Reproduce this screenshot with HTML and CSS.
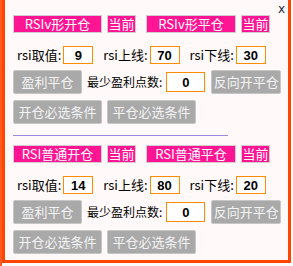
FILE: index.html
```html
<!DOCTYPE html>
<html lang="zh">
<head>
  <meta charset="UTF-8">
  <title>RSI 设置</title>
  <link rel="stylesheet" href="styles.css">
</head>
<body>
  <div class="popup">
    <span class="close">x</span>

    <!-- RSIv 形 -->
    <div class="section">
      <div class="row head">
        <button class="pink wide">RSIv形开仓</button>
        <button class="pink cur">当前</button>
        <button class="pink wide second">RSIv形平仓</button>
        <button class="pink cur">当前</button>
      </div>
      <div class="row params">
        <label>rsi取值:</label><input class="num" value="9">
        <label class="gap">rsi上线:</label><input class="num" value="70">
        <label class="gap">rsi下线:</label><input class="num" value="30">
      </div>
      <div class="row profit">
        <button class="grey w69">盈利平仓</button>
        <label class="min">最少盈利点数:</label><input class="num big" value="0">
        <button class="grey w70">反向开平仓</button>
      </div>
      <div class="row cond">
        <button class="grey w89">开仓必选条件</button>
        <button class="grey w89">平仓必选条件</button>
      </div>
    </div>

    <div class="divider"></div>

    <!-- RSI 普通 -->
    <div class="section">
      <div class="row head">
        <button class="pink wide">RSI普通开仓</button>
        <button class="pink cur">当前</button>
        <button class="pink wide second">RSI普通平仓</button>
        <button class="pink cur">当前</button>
      </div>
      <div class="row params">
        <label>rsi取值:</label><input class="num" value="14">
        <label class="gap">rsi上线:</label><input class="num" value="80">
        <label class="gap">rsi下线:</label><input class="num" value="20">
      </div>
      <div class="row profit">
        <button class="grey w69">盈利平仓</button>
        <label class="min">最少盈利点数:</label><input class="num big" value="0">
        <button class="grey w70">反向开平仓</button>
      </div>
      <div class="row cond">
        <button class="grey w89">开仓必选条件</button>
        <button class="grey w89">平仓必选条件</button>
      </div>
    </div>
  </div>
</body>
</html>
```

FILE: styles.css
```css
body {
  margin: 0;
  height: 266px;
  overflow: hidden;
  font-family: "Noto Sans CJK SC", "Liberation Sans", sans-serif;
  background: linear-gradient(to right, #ff5a1f 0, #ff5a1f 2px, #fbfbfb 2px);
}

/* === POPUP === */
.popup {
  position: relative;
  margin-left: 2px;
  width: 289px;
  height: 263px;
  padding: 15px 0 0 8px;
  box-sizing: border-box;
  background: #fffaf9;
  border: 3px solid #ff4500;
  border-top: none;
}

.close {
  position: absolute;
  top: 3px;
  right: 3px;
  font-size: 12px;
  line-height: 12px;
  color: #1a2a44;
  font-family: "DejaVu Sans", sans-serif;
}

.row {
  display: flex;
  align-items: center;
  white-space: nowrap;
}

/* === BUTTONS === */
button {
  font-family: "Noto Sans CJK SC", "Liberation Sans", sans-serif;
  margin: 0;
  padding: 0;
  flex-shrink: 0;
  white-space: nowrap;
  cursor: pointer;
}

.pink {
  height: 18px;
  font-size: 13px;
  line-height: 16px;
  color: #fff;
  background: #ff1493;
  border: 1px solid #d6cbd0;
  margin-right: 5px;
}

.pink.wide {
  width: 89px;
}

.pink.cur {
  width: 29px;
}

.pink.second {
  margin-left: 5px;
  width: 90px;
}

.grey {
  height: 24px;
  font-size: 13px;
  line-height: 22px;
  color: #f4f4f4;
  background: #a9a9a9;
  border: 1px solid #c6c6c6;
  border-radius: 2px;
}

.w69 { width: 69px; }
.w70 { width: 70px; }
.w89 { width: 89px; }

/* === PARAMS === */
label {
  font-size: 13px;
  line-height: 18px;
  color: #000;
  flex-shrink: 0;
}

.params {
  margin-top: 13px;
  padding-left: 4px;
}

.gap {
  margin-left: 10px;
}

.num {
  width: 30px;
  height: 18px;
  box-sizing: border-box;
  margin-left: 2px;
  padding: 0;
  flex-shrink: 0;
  border: 1px solid #ff8c00;
  background: #fff;
  text-align: center;
  font: bold 13px "Liberation Sans", sans-serif;
}

.num.big {
  width: 39px;
  height: 20px;
  margin: 0 6px 0 4px;
}

.profit {
  margin-top: 6px;
}

.min {
  margin-left: 5px;
  font-size: 12px;
}

.cond {
  margin-top: 6px;
  gap: 5px;
}

/* === DIVIDER === */
.divider {
  width: 215px;
  height: 0;
  margin: 11px 0 9px;
  border-top: 1px solid #9b8be0;
}
```
